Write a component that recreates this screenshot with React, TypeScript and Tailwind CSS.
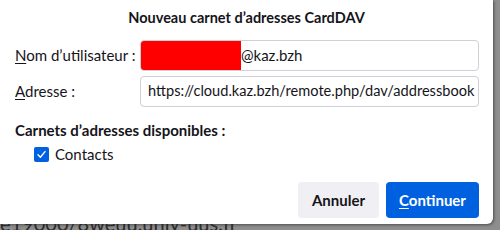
import React from 'react';

const FONT = { fontFamily: 'Lato, "Open Sans", sans-serif' };

function Field({ label, accessKey, children }: { label: string; accessKey: string; children: React.ReactNode }) {
  return (
    <div className="flex items-center">
      <label className="w-[125px] text-[15px] text-[#15141a]">
        <span className="underline underline-offset-2">{accessKey}</span>
        {label}
      </label>
      <div className="flex h-[31px] w-[339px] items-center overflow-hidden rounded-[4px] border border-[#cfcfd8] bg-white text-[15px] text-[#15141a]">
        {children}
      </div>
    </div>
  );
}

export default function App() {
  return (
    <div className="flex h-[230px] w-[500px] flex-col overflow-hidden bg-[#8e8e8e]" style={FONT}>
      <div className="flex h-[224px] w-[493px] shrink-0 flex-col rounded-br-[6px] bg-white shadow-[1px_1px_3px_rgba(0,0,0,0.45)]">
        {/* Title */}
        <h1 className="pt-[7px] text-center text-[14.5px] font-bold text-[#15141a]">
          Nouveau carnet d’adresses CardDAV
        </h1>

        {/* Fields */}
        <div className="mt-[11px] flex flex-col gap-[5px] pl-[15px]">
          <Field label="om d’utilisateur :" accessKey="N">
            <div className="h-full w-[100px] bg-[#ff0000]" />
            <span>@kaz.bzh</span>
          </Field>
          <Field label="dresse :" accessKey="A">
            <span className="whitespace-nowrap pl-[7px] text-[14.6px]">https://cloud.kaz.bzh/remote.php/dav/addressbook</span>
          </Field>
        </div>

        {/* Address books */}
        <div className="mt-[12px] pl-[15px]">
          <p className="text-[15px] font-bold text-[#15141a]">Carnets d’adresses disponibles :</p>
          <label className="mt-[2px] flex items-center gap-[6px] pl-[19px] text-[15px] text-[#15141a]">
            <span className="flex h-[15px] w-[15px] items-center justify-center rounded-[2px] bg-[#0061e0]">
              <svg width="11" height="11" viewBox="0 0 11 11" fill="none">
                <path d="M2 5.8 L4.4 8.2 L9 2.6" stroke="white" strokeWidth="1.4" strokeLinecap="round" strokeLinejoin="round" />
              </svg>
            </span>
            Contacts
          </label>
        </div>

        {/* Buttons */}
        <div className="mt-auto mb-[6px] flex justify-end gap-[7px] pr-[14px]">
          <button className="h-[36px] w-[81px] rounded-[4px] bg-[#f0f0f4] text-[15px] font-bold text-[#15141a]">
            Annuler
          </button>
          <button className="h-[36px] w-[93px] rounded-[4px] bg-[#0061e0] text-[15px] font-bold text-white">
            <span className="underline underline-offset-2">C</span>ontinuer
          </button>
        </div>
      </div>

      {/* Page behind the dialog */}
      <div className="h-[6px] overflow-hidden">
        <p className="-mt-[11px] whitespace-nowrap text-[20px] leading-[20px] text-[#2b2b2b]">e19000/8weuu.uniy-uus.fi</p>
      </div>
    </div>
  );
}
